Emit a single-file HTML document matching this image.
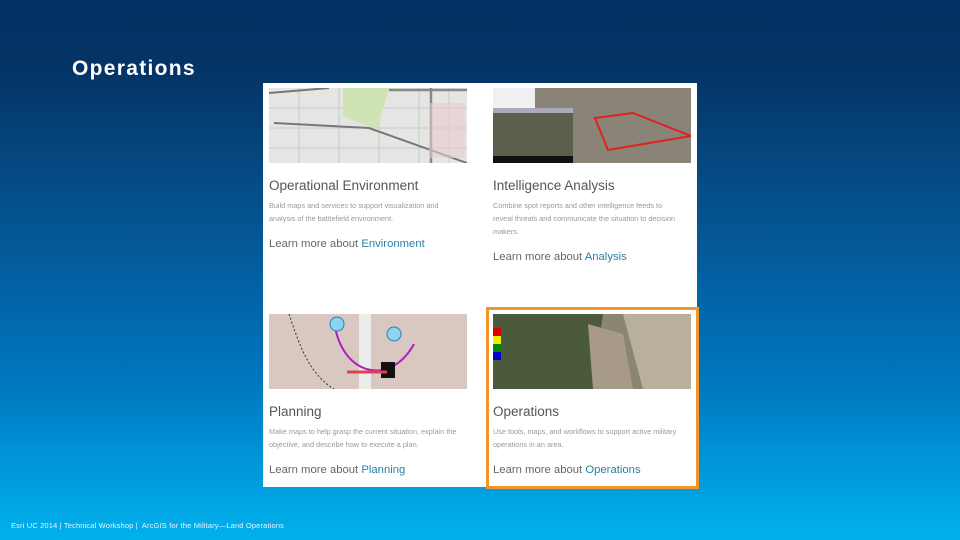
<!DOCTYPE html>
<html><head><meta charset="utf-8"><style>
*{margin:0;padding:0;box-sizing:border-box}
body{width:960px;height:540px;overflow:hidden;position:relative;font-family:"Liberation Sans",sans-serif;
background:linear-gradient(180deg,#033062 0px,#043465 70px,#05508a 200px,#0264a8 300px,#0079c1 390px,#0095d9 460px,#00b1ec 540px)}
.t{position:absolute;left:72px;top:57px;color:#fff;font-size:21px;font-weight:bold;letter-spacing:1.3px}
.panel{position:absolute;left:263px;top:83px;width:434px;height:404px;background:#fff}
.hl{position:absolute;left:486px;top:307px;width:213px;height:182px;border:3px solid #f0962c}
.img{position:absolute;width:198px;height:75px}
.h{position:absolute;font-size:13.5px;color:#555}
.p{position:absolute;font-size:7.3px;line-height:13px;color:#999;width:192px}
.l{position:absolute;font-size:11.3px;color:#666}
.l b{color:#2a7fa6;font-weight:normal}
.f{position:absolute;left:11px;top:521px;font-size:7.5px;color:#e6f4ff;letter-spacing:0.15px}
</style></head><body>
<div class="t">Operations</div>
<div class="panel"></div>
<div class="hl"></div>
<div class="img" style="left:269px;top:88px;background:#e4e4e2;overflow:hidden">
<svg width="198" height="75"><rect width="198" height="75" fill="#e5e5e3"/>
<g stroke="#c9c9c9" stroke-width="1"><path d="M0 20H198M0 40H198M0 60H198M30 0V75M70 0V75M110 0V75M150 0V75M180 0V75"/></g>
<polygon points="74,0 120,0 108,42 74,28" fill="#cfe3b5"/>
<path d="M0 5L60 0M5 35L100 40L198 75" stroke="#777" stroke-width="2" fill="none"/>
<path d="M120 2H198M162 0V75" stroke="#888" stroke-width="2.5" fill="none"/>
<rect x="160" y="15" width="36" height="55" fill="#e6cccc" opacity=".6"/></svg></div>
<div class="img" style="left:493px;top:88px;background:#6a6a60"><svg width="198" height="75">
<rect width="198" height="75" fill="#8a8478"/><rect x="0" y="0" width="42" height="25" fill="#f0f0f0"/>
<rect x="0" y="20" width="80" height="55" fill="#5b5f4c"/><rect x="0" y="20" width="80" height="5" fill="#aab"/><rect x="0" y="68" width="80" height="7" fill="#111"/>
<path d="M102 30L140 25L198 48L115 62Z" stroke="#d22" stroke-width="2" fill="none"/></svg></div>
<div class="img" style="left:269px;top:314px;background:#dcc8c2"><svg width="198" height="75">
<rect width="198" height="75" fill="#d9c7c1"/><rect x="90" y="0" width="12" height="75" fill="#ececec"/>
<path d="M65 5C70 60 120 75 145 30" stroke="#b020c0" stroke-width="2" fill="none"/>
<circle cx="68" cy="10" r="7" fill="#8cd3f0" stroke="#2a7fb0"/><circle cx="125" cy="20" r="7" fill="#8cd3f0" stroke="#2a7fb0"/>
<rect x="112" y="48" width="14" height="16" fill="#111"/><path d="M78 58H118" stroke="#e04050" stroke-width="3"/>
<path d="M20 0C30 30 40 60 65 75" stroke="#333" stroke-dasharray="2 2" fill="none"/></svg></div>
<div class="img" style="left:493px;top:314px"><svg width="198" height="75">
<rect width="198" height="75" fill="#8a8670"/><polygon points="0,0 110,0 100,75 0,75" fill="#4c5a3c"/>
<polygon points="130,0 198,0 198,75 150,75" fill="#b8b09c"/><polygon points="95,10 130,20 140,75 100,75" fill="#a89a88"/>
<rect x="0" y="14" width="8" height="8" fill="#d00"/><rect x="0" y="22" width="8" height="8" fill="#ee0"/><rect x="0" y="30" width="8" height="8" fill="#080"/><rect x="0" y="38" width="8" height="8" fill="#00c"/></svg></div>
<div class="h" style="left:269px;top:178px">Operational Environment</div>
<div class="p" style="left:269px;top:199px">Build maps and services to support visualization and analysis of the battlefield environment.</div>
<div class="l" style="left:269px;top:238px">Learn more about <b>Environment</b></div>
<div class="h" style="left:493px;top:178px">Intelligence Analysis</div>
<div class="p" style="left:493px;top:199px;width:190px">Combine spot reports and other intelligence feeds to reveal threats and communicate the situation to decision makers.</div>
<div class="l" style="left:493px;top:251px">Learn more about <b>Analysis</b></div>
<div class="h" style="left:269px;top:404px">Planning</div>
<div class="p" style="left:269px;top:425px;width:200px">Make maps to help grasp the current situation, explain the objective, and describe how to execute a plan.</div>
<div class="l" style="left:269px;top:464px">Learn more about <b>Planning</b></div>
<div class="h" style="left:493px;top:404px">Operations</div>
<div class="p" style="left:493px;top:425px;width:196px">Use tools, maps, and workflows to support active military operations in an area.</div>
<div class="l" style="left:493px;top:464px">Learn more about <b>Operations</b></div>
<div class="f">Esri UC 2014 | Technical Workshop |&nbsp; ArcGIS for the Military—Land Operations</div>
</body></html>
